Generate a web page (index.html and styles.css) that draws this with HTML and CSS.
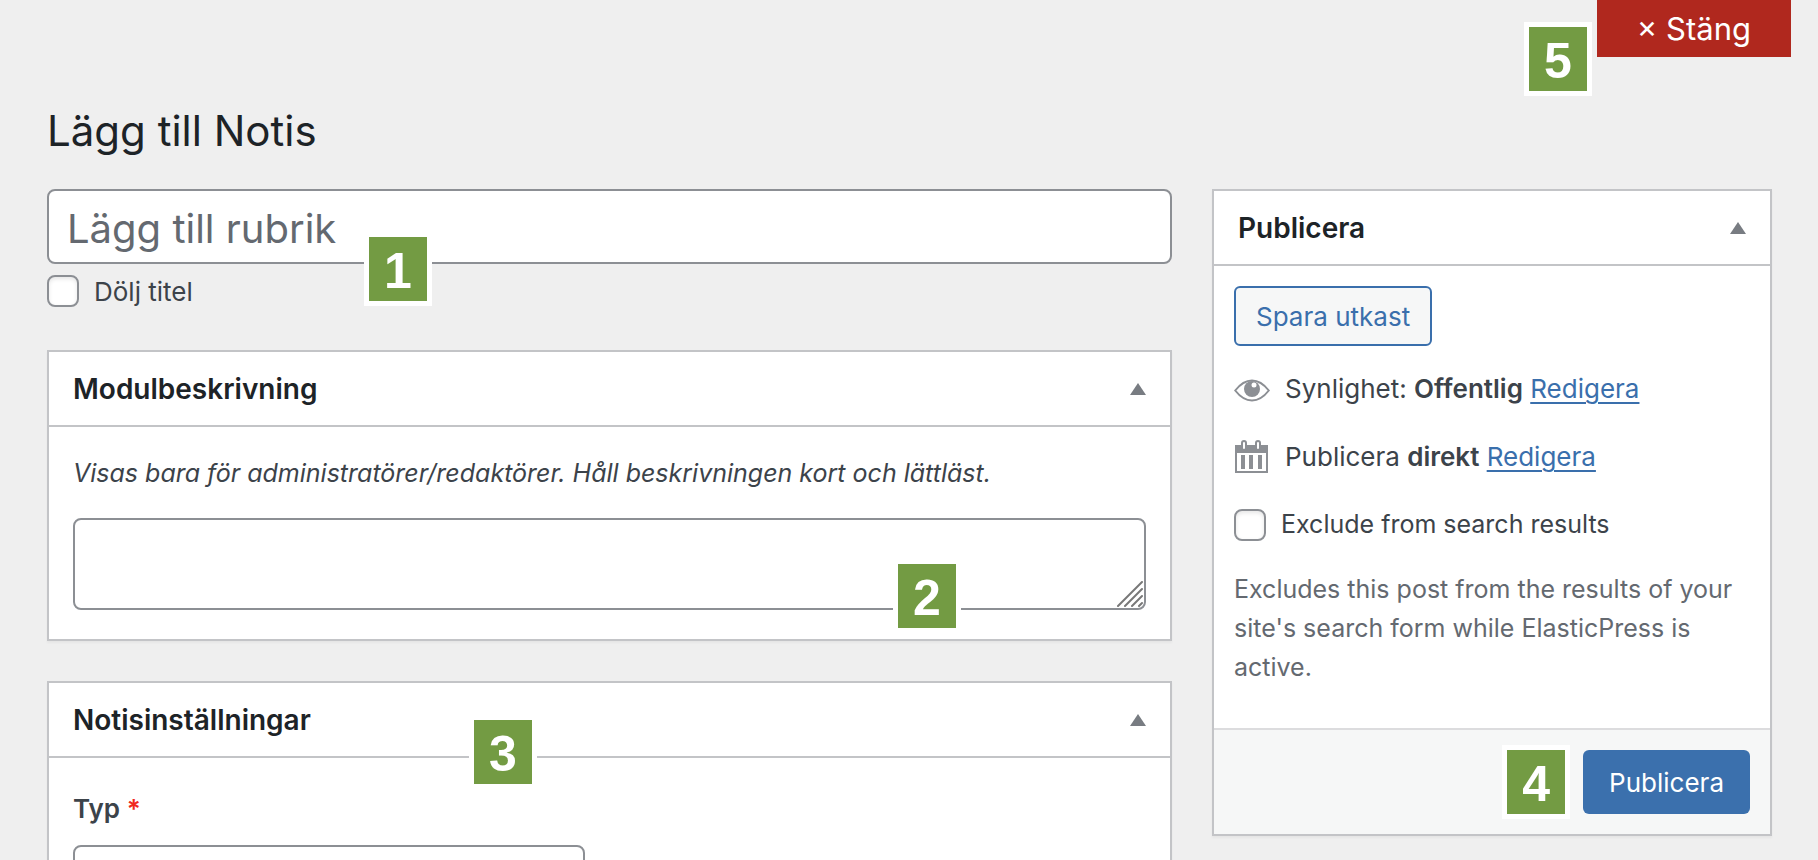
FILE: index.html
```html
<!DOCTYPE html>
<html lang="sv">
<head>
<meta charset="utf-8">
<title>Lägg till Notis</title>
<meta name="viewport" content="width=device-width, initial-scale=1">
<link rel="stylesheet" href="styles.css">
</head>
<body>
<div class="topbar">
  <button class="close" type="button">× Stäng<span class="badge badge-close">5</span></button>
</div>
<main class="page">
  <h1 class="page-title">Lägg till Notis</h1>
  <div class="columns">
    <div class="main">
      <div class="title-field">
        <input class="title-input" type="text" aria-label="Lägg till rubrik" placeholder="Lägg till rubrik">
        <span class="badge badge-title">1</span>
      </div>
      <div class="check-row">
        <input class="check" type="checkbox" id="hide-title">
        <label for="hide-title">Dölj titel</label>
      </div>

      <section class="box">
        <header class="box-head">
          <h2 class="box-title">Modulbeskrivning</h2>
          <button class="toggle" type="button" aria-label="Visa eller dölj Modulbeskrivning"><svg class="arrow" viewBox="0 0 16 12"><path d="M8 0L16 12H0z"/></svg></button>
        </header>
        <div class="box-body">
          <label class="desc" for="module-desc">Visas bara för administratörer/redaktörer. Håll beskrivningen kort och lättläst.</label>
          <div class="area-wrap">
            <textarea class="area" id="module-desc"></textarea>
            <svg class="grip" viewBox="0 0 26 26"><path d="M1 25L25 1M8 25L25 8M15 25L25 15M22 25L25 22"/></svg>
            <span class="badge badge-area">2</span>
          </div>
        </div>
      </section>

      <section class="box box-settings">
        <header class="box-head">
          <h2 class="box-title">Notisinställningar</h2>
          <button class="toggle" type="button" aria-label="Visa eller dölj Notisinställningar"><svg class="arrow" viewBox="0 0 16 12"><path d="M8 0L16 12H0z"/></svg></button>
          <span class="badge badge-settings">3</span>
        </header>
        <div class="box-body settings-body">
          <label class="field-label" for="type">Typ <span class="required">*</span></label>
          <select class="select" id="type"><option></option></select>
        </div>
      </section>
    </div>

    <aside class="side">
      <section class="box">
        <header class="box-head">
          <h2 class="box-title">Publicera</h2>
          <button class="toggle" type="button" aria-label="Visa eller dölj Publicera"><svg class="arrow" viewBox="0 0 16 12"><path d="M8 0L16 12H0z"/></svg></button>
        </header>
        <div class="publish-body">
          <button class="button-secondary" type="button">Spara utkast</button>
          <p class="status status-first">
            <svg class="icon" viewBox="0 0 36 36"><path d="M1.200 19.500Q9 9.500 18 9.500T34.800 19.500Q27 29.500 18 29.500T1.200 19.500z" fill="none" stroke="#8c8f94" stroke-width="2"/><circle cx="18" cy="18" r="8" fill="#8c8f94"/><circle cx="20" cy="14" r="2.500" fill="#fff"/></svg>
            <span>Synlighet: <b>Offentlig</b> <a class="link" href="#">Redigera</a></span>
          </p>
          <p class="status">
            <svg class="icon" viewBox="0 0 36 36"><path fill="#8c8f94" fill-rule="evenodd" d="M1 6h6V4a3 3 0 0 1 6 0v2h8V4a3 3 0 0 1 6 0v2h7v28H1zM3 14v18h29V14zM9 4v5a1 1 0 0 0 2 0V4a1 1 0 0 0-2 0zM23 4v5a1 1 0 0 0 2 0V4a1 1 0 0 0-2 0zM7 16h4v14H7zM15 16h4v14h-4zM24 16h4v14h-4z"/></svg>
            <span>Publicera <b>direkt</b> <a class="link" href="#">Redigera</a></span>
          </p>
          <div class="check-row exclude-row">
            <input class="check" type="checkbox" id="exclude">
            <label for="exclude">Exclude from search results</label>
          </div>
          <p class="help">Excludes this post from the results of your site's search form while ElasticPress is active.</p>
        </div>
        <footer class="publish-foot">
          <span class="badge-inline">4</span>
          <button class="button-primary" type="button">Publicera</button>
        </footer>
      </section>
    </aside>
  </div>
</main>
</body>
</html>
```
FILE: styles.css
```css
* { box-sizing: border-box; }

body {
  margin: 0;
  height: 100vh;
  overflow: hidden;
  background: #efefef;
  color: #3c434a;
  font: 26px/39px Inter, "Liberation Sans", sans-serif;
}

h1, h2, p { margin: 0; }
button, input, textarea, select { font: inherit; margin: 0; }
b { font-weight: 600; }

.topbar {
  display: flex;
  justify-content: flex-end;
  padding-right: 27px;
}

.close {
  position: relative;
  padding: 0 40px;
  height: 57px;
  border: 0;
  background: #b0281e;
  color: #fff;
  font-size: 31px;
}

.page { padding: 44px 46px 0 47px; }

.page-title {
  margin-bottom: 28px;
  color: #1d2327;
  font-size: 42px;
  font-weight: 400;
  line-height: 60px;
}

.columns {
  display: grid;
  grid-template-columns: minmax(0, 1fr) 560px;
  gap: 40px;
  align-items: start;
}

.title-field { position: relative; }

.title-input {
  display: block;
  width: 100%;
  height: 75px;
  padding: 4px 18px 0;
  border: 2px solid #8c8f94;
  border-radius: 8px;
  background: #fff;
  font-size: 40px;
}
.title-input::placeholder { color: #646970; opacity: 1; }

.check-row {
  display: flex;
  align-items: center;
  gap: 15px;
}
.title-field + .check-row {
  height: 32px;
  margin: 11px 0 43px;
}

.check {
  appearance: none;
  width: 32px;
  height: 32px;
  border: 2px solid #8c8f94;
  border-radius: 8px;
  background: #fff;
  box-shadow: inset 0 2px 4px rgba(0, 0, 0, .1);
}

.box {
  border: 2px solid #c3c4c7;
  background: #fff;
  box-shadow: 0 2px 2px rgba(0, 0, 0, .04);
}
.box-settings { margin-top: 40px; }

.box-head {
  position: relative;
  display: flex;
  align-items: center;
  justify-content: space-between;
  height: 75px;
  padding: 0 24px;
  border-bottom: 2px solid #c3c4c7;
}

.box-title {
  padding-top: 2px;
  color: #1d2327;
  font-size: 28px;
  font-weight: 600;
}

.toggle {
  display: flex;
  padding: 0;
  border: 0;
  background: none;
}
.arrow { width: 16px; height: 12px; fill: #787c82; }

.box-body { padding: 27px 24px 29px; }
.settings-body { padding-top: 31px; }

.desc {
  display: block;
  margin-bottom: 25px;
  font-size: 25px;
  font-style: italic;
}

.area-wrap { position: relative; }
.area {
  display: block;
  width: 100%;
  height: 92px;
  border: 2px solid #8c8f94;
  border-radius: 8px;
  background: #fff;
  resize: none;
}
.grip {
  position: absolute;
  right: 3px;
  bottom: 3px;
  width: 26px;
  height: 26px;
  fill: none;
  stroke: #787878;
  stroke-width: 2;
  stroke-linecap: round;
}

.field-label {
  display: block;
  margin-bottom: 17px;
  font-weight: 600;
}
.required { color: #f0281e; }

.select {
  appearance: none;
  display: block;
  width: 512px;
  max-width: 100%;
  height: 60px;
  border: 2px solid #8c8f94;
  border-radius: 8px;
  background: #fff;
}

.publish-body { padding: 20px 20px 41px; }

.button-secondary {
  display: block;
  height: 60px;
  padding: 0 20px;
  border: 2px solid #3a6fac;
  border-radius: 6px;
  background: #f6f7f7;
  color: #3a6fac;
}

.status {
  display: flex;
  align-items: center;
  gap: 15px;
  margin-top: 29px;
}
.status-first { margin-top: 23px; }
.icon { width: 36px; height: 36px; }

.link {
  color: #3a6fac;
  text-decoration-thickness: 2px;
  text-underline-offset: 4px;
}

.exclude-row { margin-top: 29px; }
.exclude-row, .help { font-size: 25px; }
.help { margin-top: 26px; color: #646970; }

.publish-foot {
  display: flex;
  align-items: center;
  justify-content: flex-end;
  gap: 13px;
  padding: 15px 20px;
  border-top: 2px solid #dcdcde;
  background: #f6f7f7;
}

.button-primary {
  height: 64px;
  padding: 0 26px;
  border: 0;
  border-radius: 6px;
  background: #3b70ad;
  color: #fff;
}

.badge, .badge-inline {
  width: 68px;
  height: 74px;
  border: 5px solid #fff;
  background: #739b43;
  color: #fff;
  font: bold 50px/68px "Liberation Sans", Arial, sans-serif;
  text-align: center;
}
.badge { position: absolute; }
.badge-close { right: 199px; top: 22px; }
.badge-title { left: 317px; top: 43px; }
.badge-area { right: 185px; top: 41px; }
.badge-settings { left: 420px; top: 32px; }
```
